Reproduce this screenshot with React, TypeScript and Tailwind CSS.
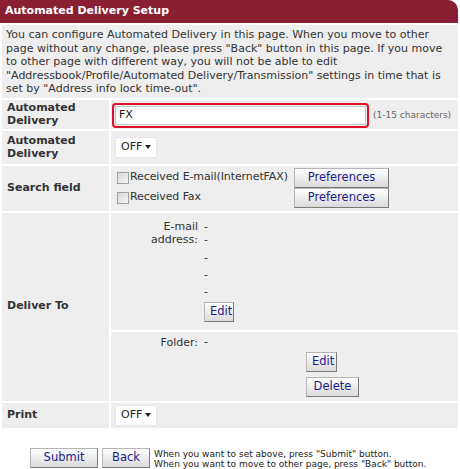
import React from "react";

function Btn({ children, className = "" }: { children: React.ReactNode; className?: string }) {
  return (
    <button
      className={
        "h-[20px] border border-[#b5b5b5] border-r-[#7a7a7a] border-b-[#7a7a7a] bg-gradient-to-b from-white to-[#dadada] text-[#1c1c8a] text-[11.5px] leading-none px-[5px] " +
        className
      }
    >
      {children}
    </button>
  );
}

function Select() {
  return (
    <div className="w-[42px] h-[21px] bg-white border border-[#e6e6e6] flex items-center justify-between pl-[5px] pr-[5px] text-[11px] text-[#222]">
      <span>OFF</span>
      <span className="w-0 h-0 border-l-[3px] border-r-[3px] border-t-[4px] border-l-transparent border-r-transparent border-t-[#222]" />
    </div>
  );
}

function Check({ label }: { label: string }) {
  return (
    <label className="flex items-center gap-[1px] whitespace-nowrap text-[11px] tracking-[-0.1px] text-[#333]">
      <span className="w-[12px] h-[12px] border border-[#a0a0a0] bg-gradient-to-br from-[#d8d8d8] to-[#f6f6f6]" />
      {label}
    </label>
  );
}

export default function App() {
  return (
    <div className="w-[460px] bg-white font-['DejaVu_Sans',Verdana,sans-serif] text-[11px] text-[#333] pl-[2px] pr-[2px]">
      <div className="h-[23px] bg-[#8a1f34] rounded-tr-[10px] text-white text-[11px] font-bold flex items-center pl-[5px] -ml-[2px]">
        Automated Delivery Setup
      </div>
      <div className="mt-[2px] bg-[#eeeeee] px-[4px] pt-[3px] pb-[2px] leading-[13.5px] whitespace-nowrap">
        You can configure Automated Delivery in this page. When you move to other
        <br />
        page without any change, please press "Back" button in this page. If you move
        <br />
        to other page with different way, you will not be able to edit
        <br />
        "Addressbook/Profile/Automated Delivery/Transmission" settings in time that is
        <br />
        set by "Address info lock time-out".
      </div>

      <div className="mt-[2px] grid grid-cols-[107px_1fr] gap-[2px]">
        {/* Row 1 */}
        <div className="bg-[#eeeeee] h-[29px] font-bold leading-[13px] px-[5px] flex items-center">
          Automated Delivery
        </div>
        <div className="bg-[#eeeeee] flex items-center pt-[3px] pl-[1px]">
          <div className="w-[257px] h-[25px] border-2 border-[#e0102a] rounded-[4px] p-[1px]">
            <div className="h-full bg-white border border-[#c8c8c8] flex items-center pl-[3px] text-[11px] text-[#111]">
              FX
            </div>
          </div>
          <span className="ml-[4px] text-[9px] text-[#666]">(1-15 characters)</span>
        </div>

        {/* Row 2 */}
        <div className="bg-[#eeeeee] h-[33px] font-bold leading-[13px] px-[5px] flex items-center">
          Automated Delivery
        </div>
        <div className="bg-[#eeeeee] flex items-center pl-[4px]">
          <Select />
        </div>

        {/* Row 3 */}
        <div className="bg-[#eeeeee] h-[45px] font-bold px-[5px] flex items-center">Search field</div>
        <div className="bg-[#eeeeee] pt-[2px] pl-[6px] flex flex-col">
          <div className="flex items-center">
            <div className="w-[177px]">
              <Check label="Received E-mail(InternetFAX)" />
            </div>
            <Btn className="w-[95px]">Preferences</Btn>
          </div>
          <div className="flex items-center">
            <div className="w-[177px]">
              <Check label="Received Fax" />
            </div>
            <Btn className="w-[95px]">Preferences</Btn>
          </div>
        </div>

        {/* Row 4 */}
        <div className="bg-[#eeeeee] font-bold px-[5px] flex items-center">Deliver To</div>
        <div className="flex flex-col gap-[2px]">
          <div className="bg-[#eeeeee] h-[117px] grid grid-cols-[89px_1fr] pt-[7px]">
            <div className="text-right leading-[13px] pr-[2px]">
              E-mail
              <br />
              address:
            </div>
            <div className="pl-[4px] flex flex-col items-start leading-[17px]">
              <span className="leading-[13px]">-</span>
              <span className="leading-[13px]">-</span>
              <span className="mt-[3px]">-</span>
              <span>-</span>
              <span>-</span>
              <Btn className="mt-[2px] w-[30px] px-0">Edit</Btn>
            </div>
          </div>
          <div className="bg-[#eeeeee] h-[69px] grid grid-cols-[89px_1fr] pt-[3px]">
            <div className="text-right pr-[2px]">Folder:</div>
            <div className="pl-[4px] flex flex-col items-start">
              <span className="leading-[14px]">-</span>
              <Btn className="ml-[102px] mt-[3px] w-[31px] px-0">Edit</Btn>
              <Btn className="ml-[102px] mt-[5px] w-[53px] px-0">Delete</Btn>
            </div>
          </div>
        </div>

        {/* Row 5 */}
        <div className="bg-[#eeeeee] font-bold px-[5px] h-[25px] flex items-center">Print</div>
        <div className="bg-[#eeeeee] flex items-center pl-[4px]">
          <Select />
        </div>
      </div>

      <div className="mt-[20px] flex items-start pl-[28px]">
        <Btn className="w-[68px]">Submit</Btn>
        <Btn className="ml-[4px] w-[48px]">Back</Btn>
        <div className="ml-[4px] text-[9px] leading-[10px] text-[#222] pt-[1px]">
          When you want to set above, press "Submit" button.
          <br />
          When you want to move to other page, press "Back" button.
        </div>
      </div>
    </div>
  );
}
